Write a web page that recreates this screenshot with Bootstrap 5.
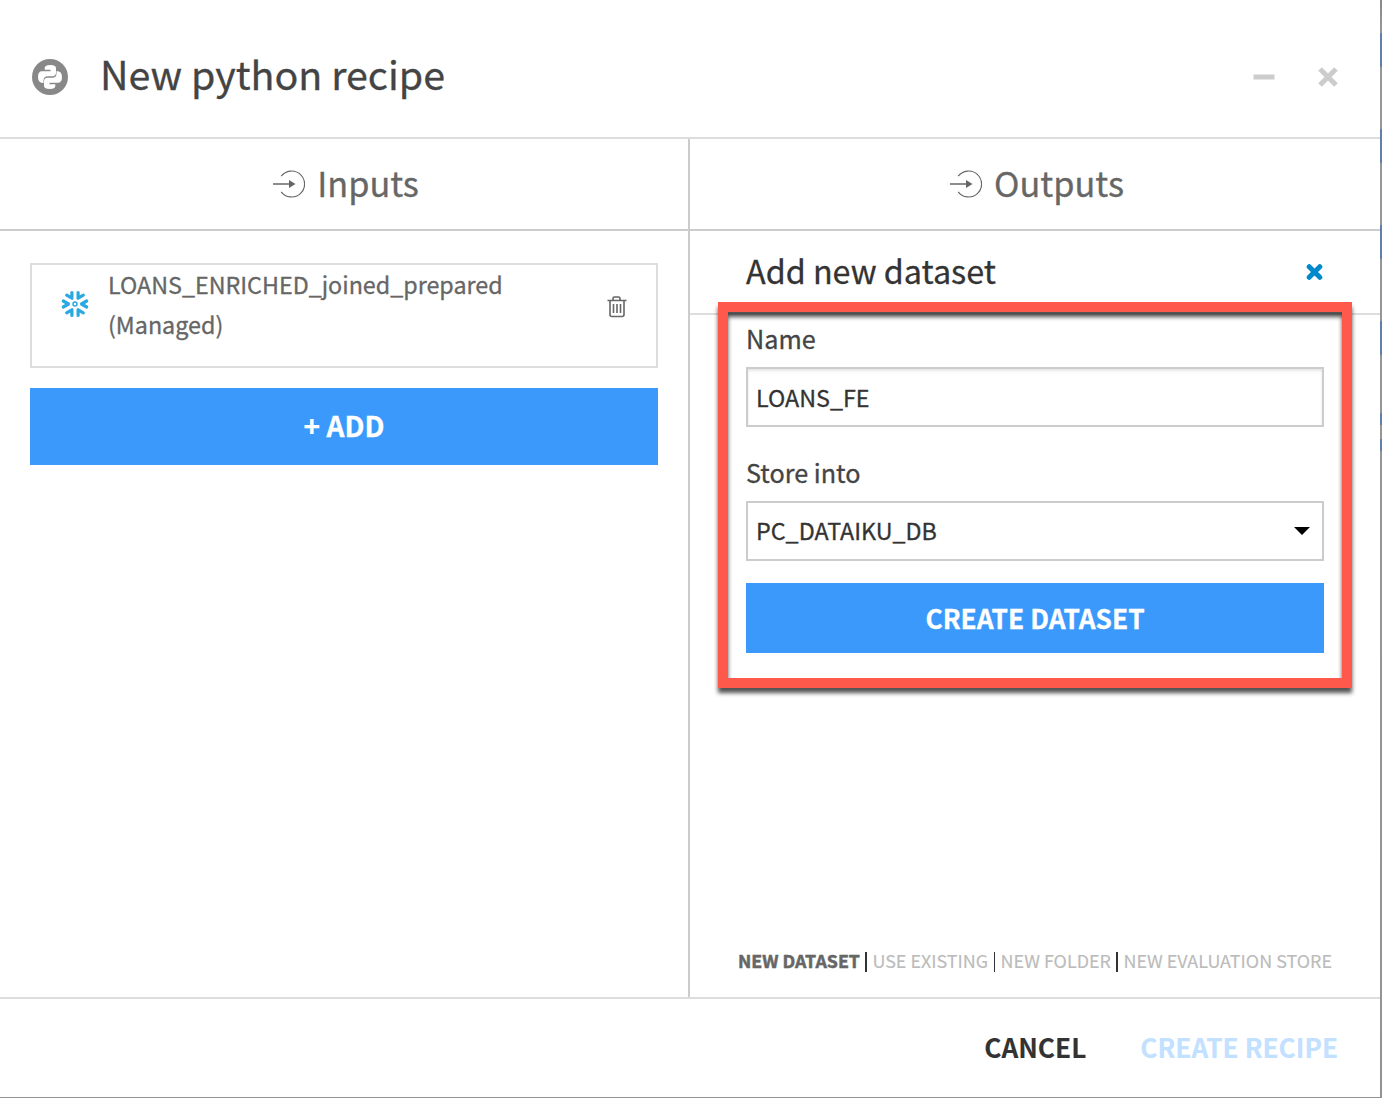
<!DOCTYPE html>
<html lang="en">
<head>
<meta charset="utf-8">
<title>New python recipe</title>
<link href="https://cdn.jsdelivr.net/npm/bootstrap@5.3.0/dist/css/bootstrap.min.css" rel="stylesheet">
<style>
body{font-family:"Noto Sans CJK JP","Noto Sans",sans-serif;background:#939393;width:1382px;height:1098px;overflow:hidden;color:#333;-webkit-text-stroke:.3px currentColor}
.shell{height:1098px}
.dialog{width:1380px;height:1097px;background:#fff}
.page-edge{width:2px;background:linear-gradient(#888 0,#979797 30px,#939393 100%)}
.edge-mark{width:2px;background:#5f7fa9;border-radius:1px 0 0 1px}
.dlg-head{height:139px;border-bottom:2px solid #ddd;padding:8px 41px 0 32px}
.recipe-icon{margin-top:9px}
.win-icons{margin-top:8px}
.dlg-title{font-size:39.4px;line-height:60px;color:#444;margin-left:32px;font-weight:400}
.pane-left{width:690px;border-right:2px solid #ccc}
.pane-head{height:92px;border-bottom:2px solid #ccc;font-size:34.3px;line-height:50px;color:#666;padding:0 0 4px 4px}
.pane-body{padding:32px 30px 0}
.input-item{height:105px;border:2px solid #ddd;font-size:23.3px;line-height:40px;color:#666;padding:0 29px 0 29px}
.item-name{margin:-1px 0 0 19px}
.item-icon{margin-top:25px}
.item-trash{margin-top:31px}
.btn-flat{background:#3b99fc;color:#fff;font-weight:700;border:0;border-radius:0}
.btn-flat:hover{background:#3b99fc;color:#fff}
.btn-add{height:77px;margin-top:20px;font-size:28px;padding:0 0 4px}
.btn-create{height:70px;margin-top:22px;font-size:26.3px;padding:0}
.new-head{height:84px;border-bottom:2px solid #ddd;padding:0 57px 5px 56px;font-size:32.3px;line-height:48px}
.new-form{padding:5px 56px 0;color:#444;font-size:25.2px}
.new-form label{line-height:36px;display:block}
.store-label{margin-top:27px}
.field{height:60px;border:2px solid #ccc;border-radius:0;padding:0 8px;font-size:23.3px;line-height:54px;color:#333;box-shadow:none}
.field-text{box-shadow:inset 0 2px 3px rgba(0,0,0,.1);margin-top:11px;line-height:56px}
.field-select{margin-top:11px}
.field-value{margin-top:-2px}
.highlight{left:28px;top:163px;width:634px;height:386px;border:10px solid #ff594b;filter:drop-shadow(0 5px 2px rgba(0,0,0,.68));pointer-events:none}
.modes{font-size:17.95px;line-height:30px;color:#bbb;padding:0 48px 22px;white-space:nowrap;-webkit-text-stroke-width:.15px}
.mode-on{color:#666;font-size:17.8px;-webkit-text-stroke-width:.5px}
.bar{width:1.500px;height:20px;background:#333;margin-top:4px}
.dlg-foot{height:100px;border-top:2px solid #ddd;padding:0 42px 2px 0;font-weight:700;font-size:26.2px;line-height:40px;-webkit-text-stroke-width:.1px}
.act-off{color:#c2e0ff;margin-left:54px}
</style>
<script src="https://cdn.jsdelivr.net/npm/bootstrap@5.3.0/dist/js/bootstrap.bundle.min.js"></script>
</head>
<body>
<svg width="0" height="0" class="position-absolute">
<symbol id="enter" viewBox="0 0 32 28"><path d="M8.2 6.2A13 13 0 1 1 8.2 21.800" fill="none" stroke="#666" stroke-width="1.2"/><path d="M0 14h18" stroke="#666" stroke-width="1.5"/><path d="M16 10l6.500 4-6.500 4z" fill="#666"/></symbol>
</svg>
<div class="shell d-flex">
<main class="dialog d-flex flex-column">
<header class="dlg-head d-flex align-items-center">
<svg class="recipe-icon" width="36" height="36" viewBox="0 0 36 36"><circle cx="18" cy="18" r="18" fill="#888"/>
<path id="snake" d="M12.700 10.800V9Q12.700 6 18.300 6T24 9V13.500Q24 17.200 20.500 17.200H16Q11.500 17.200 11.500 21.500V24Q6 24 6 18T10.500 12.200H18.500V10.800z" fill="#fff"/>
<use href="#snake" transform="rotate(180 18 18)"/></svg>
<h1 class="dlg-title mb-0 text-nowrap">New python recipe</h1>
<svg class="win-icons ms-auto" width="86" height="24" viewBox="0 0 86 24"><path d="M.5 12h21" stroke="#ccc" stroke-width="5"/><path d="M67 4l16 16M83 4l-16 16" stroke="#ccc" stroke-width="5"/></svg>
</header>
<div class="d-flex flex-grow-1">
<section class="pane-left d-flex flex-column">
<div class="pane-head d-flex justify-content-center align-items-center"><svg width="32" height="28" class="me-2 mt-1"><use href="#enter"/></svg><span class="ms-1">Inputs</span></div>
<div class="pane-body">
<div class="input-item d-flex">
<svg class="item-icon" width="28" height="28" viewBox="-14 -14 28 28"><g fill="none" stroke="#29a9e0" stroke-width="3.200" stroke-linecap="round" stroke-linejoin="round"><g id="arm"><path d="M-8.300 -8.800L-3.100 -5.800V-11.500"/></g><use href="#arm" transform="scale(-1 1)"/><use href="#arm" transform="scale(1 -1)"/><use href="#arm" transform="scale(-1 -1)"/><path d="M-11.700 -3L-6.500 0L-11.700 3M11.700 -3L6.500 0L11.700 3"/><circle r="2" stroke-width="1.500"/></g></svg>
<div class="item-name">LOANS_ENRICHED_joined_prepared<br>(Managed)</div>
<svg class="item-trash ms-auto" width="20" height="22" viewBox="0 0 20 22" fill="none" stroke="#666" stroke-width="1.600"><path d="M.5 4.500h19M6 4V2.500Q6 1 7.500 1h4Q13 1 13 2.500V4M3 5v13.500Q3 20.500 5 20.500h10Q17 20.500 17 18.500V5M6.500 8v9M10 8v9M13.500 8v9"/></svg>
</div>
<button class="btn btn-flat btn-add w-100">+ ADD</button>
</div>
</section>
<section class="position-relative flex-grow-1 d-flex flex-column">
<div class="pane-head d-flex justify-content-center align-items-center"><svg width="32" height="28" class="me-2 mt-1"><use href="#enter"/></svg><span class="ms-1">Outputs</span></div>
<div class="new-head d-flex align-items-center justify-content-between"><span>Add new dataset</span><svg width="17" height="16" viewBox="0 0 16 16" class="mt-1"><path d="M2.700 2.700l10.600 10.600M13.300 2.700L2.700 13.300" stroke="#0088cc" stroke-width="5" stroke-linecap="round"/></svg></div>
<div class="new-form">
<label>Name</label>
<div class="form-control field field-text">LOANS_FE</div>
<label class="store-label">Store into</label>
<div class="form-control field field-select d-flex align-items-center justify-content-between"><span class="field-value">PC_DATAIKU_DB</span><svg width="16" height="8" class="me-1"><path d="M0 0h16L8 8z"/></svg></div>
<button class="btn btn-flat btn-create w-100">CREATE DATASET</button>
</div>
<div class="highlight position-absolute"></div>
<nav class="modes d-flex align-items-center justify-content-between mt-auto"><b class="mode-on">NEW DATASET</b><i class="bar"></i><span>USE EXISTING</span><i class="bar"></i><span>NEW FOLDER</span><i class="bar"></i><span>NEW EVALUATION STORE</span></nav>
</section>
</div>
<footer class="dlg-foot d-flex align-items-center justify-content-end"><span>CANCEL</span><span class="act-off">CREATE RECIPE</span></footer>
</main>
<div class="page-edge d-flex flex-column"><div class="edge-mark" style="height:34px;margin-top:33px"></div><div class="edge-mark" style="height:34px;margin-top:62px"></div><div class="edge-mark" style="height:34px;margin-top:62px"></div><div class="edge-mark" style="height:34px;margin-top:62px"></div><div class="edge-mark" style="height:12px;margin-top:58px"></div><div class="edge-mark" style="height:12px;margin-top:14px"></div></div>
</div>
</body>
</html>
